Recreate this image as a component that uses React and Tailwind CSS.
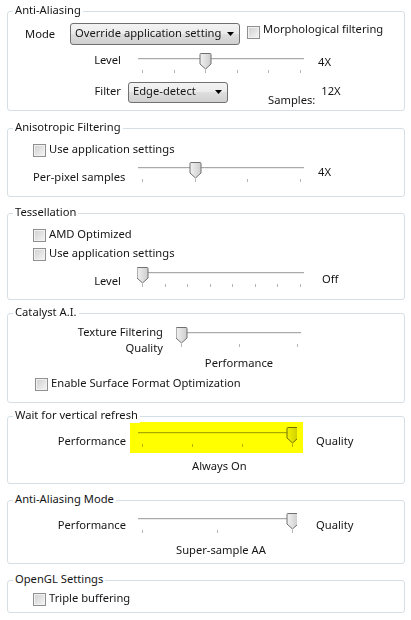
import React, { useId } from 'react';

// Win7-style trackbar: thin track, pointed thumb, ticks underneath
const Slider = ({ width, ticks, value, className = '' }) => {
    const id = useId();
    const inset = 5;
    const span = width - inset * 2;
    const xs = Array.from({ length: ticks }, (_, i) => Math.round(inset + (span * i) / (ticks - 1)));
    const t = xs[value] + 0.5;
    const thumb = `M${t - 4.5},0.5 H${t + 4.5} Q${t + 5.5},0.5 ${t + 5.5},1.5 V11 L${t},16 L${t - 5.5},11 V1.5 Q${t - 5.5},0.5 ${t - 4.5},0.5 Z`;
    return (
        <svg width={width} height={22} className={`block shrink-0 ${className}`}>
            <defs>
                <linearGradient id={id} x1="0" x2="1" y1="0" y2="0">
                    <stop offset="0" stopColor="#f2f2f2" />
                    <stop offset="1" stopColor="#cdcdcd" />
                </linearGradient>
            </defs>
            <line x1={1} x2={width - 1} y1={5.5} y2={5.5} stroke="#a9a9a9" />
            <line x1={1} x2={width - 1} y1={6.5} y2={6.5} stroke="#ececec" />
            {xs.map((x) => (
                <line key={x} x1={x + 0.5} x2={x + 0.5} y1={17} y2={20} stroke="#b5b5b5" />
            ))}
            <path d={thumb} fill={`url(#${id})`} stroke="#707070" />
        </svg>
    );
};

const Check = ({ className = '' }) => (
    <span className={`block h-[13px] w-[13px] shrink-0 border border-[#8e8f8f] bg-linear-to-br from-[#cfcfcf] to-[#f6f6f6] shadow-[inset_0_0_0_1px_#f2f2f2] ${className}`} />
);

const CheckRow = ({ label, className = '' }) => (
    <div className={`flex h-[13px] items-center ${className}`}>
        <Check />
        <span className="ml-[3px] -mt-[4px] leading-[16px] whitespace-nowrap">{label}</span>
    </div>
);

const Combo = ({ value, className = '' }) => (
    <div className={`flex shrink-0 items-center justify-between rounded-[3px] border border-[#707070] bg-[linear-gradient(#f3f3f3,#ebebeb_50%,#dedede_50%,#d0d0d0)] pl-[4px] pr-[5px] pb-[3px] ${className}`}>
        <span className="min-w-0 overflow-hidden leading-[16px] whitespace-nowrap">{value}</span>
        <svg width="7" height="4" className="mt-[2px] shrink-0">
            <path d="M0 0H7L3.5 4Z" fill="#000" />
        </svg>
    </div>
);

const Group = ({ title, className = '', children }) => (
    <div className={`relative box-border w-[398px] rounded-[3px] border border-[#d5dfe5] ${className}`}>
        <span className="absolute left-[5px] top-[-10px] bg-white px-[2px] leading-[16px] whitespace-nowrap">{title}</span>
        {children}
    </div>
);

const App = () => {
    return (
        <div className="h-[620px] w-[411px] overflow-hidden bg-white pl-[7px] pt-[11px] font-['Noto_Sans','Open_Sans',sans-serif] text-[11.2px] text-[#151515]">
            <Group title="Anti-Aliasing" className="h-[100px]">
                <div className="mt-[11px] flex h-[22px] items-start">
                    <span className="ml-[17px] mt-[3px] w-[45px] leading-[16px]">Mode</span>
                    <Combo value="Override application setting" className="h-[22px] w-[170px]" />
                    <Check className="ml-[7px] mt-[3px]" />
                    <span className="ml-[3px] -mt-[2px] leading-[16px] whitespace-nowrap">Morphological filtering</span>
                </div>
                <div className="mt-[8px] flex h-[22px] items-start">
                    <span className="-mt-[1px] w-[113px] text-right leading-[16px]">Level</span>
                    <Slider width={168} ticks={6} value={2} className="ml-[16px]" />
                    <span className="ml-[13px] mt-[1px] leading-[16px]">4X</span>
                </div>
                <div className="mt-[7px] flex h-[21px] items-start">
                    <span className="mt-[1px] w-[113px] text-right leading-[16px]">Filter</span>
                    <Combo value="Edge-detect" className="ml-[7px] h-[21px] w-[100px]" />
                    <span className="ml-[40px] mt-[10px] leading-[16px]">Samples:</span>
                    <span className="ml-[6px] mt-[1px] leading-[16px]">12X</span>
                </div>
            </Group>

            <Group title="Anisotropic Filtering" className="mt-[17px] h-[69px]">
                <CheckRow label="Use application settings" className="ml-[25px] mt-[15px]" />
                <div className="mt-[5px] flex items-start">
                    <span className="ml-[25px] mt-[7px] w-[104px] leading-[16px] whitespace-nowrap">Per-pixel samples</span>
                    <Slider width={168} ticks={4} value={1} />
                    <span className="ml-[13px] mt-[2px] leading-[16px]">4X</span>
                </div>
            </Group>

            <Group title="Tessellation" className="mt-[16px] h-[87px]">
                <CheckRow label="AMD Optimized" className="ml-[25px] mt-[15px]" />
                <CheckRow label="Use application settings" className="ml-[25px] mt-[6px]" />
                <div className="mt-[6px] flex items-start">
                    <span className="mt-[6px] w-[113px] text-right leading-[16px]">Level</span>
                    <Slider width={168} ticks={8} value={0} className="ml-[16px]" />
                    <span className="ml-[17px] mt-[4px] leading-[16px]">Off</span>
                </div>
            </Group>

            <Group title="Catalyst A.I." className="mt-[13px] h-[90px]">
                <div className="mt-[10px] flex items-start">
                    <div className="w-[155px] text-right leading-[16px]">
                        <div>Texture Filtering</div>
                        <div>Quality</div>
                    </div>
                    <div className="ml-[13px] mt-[3px] flex flex-col items-center">
                        <Slider width={126} ticks={3} value={0} />
                        <span className="mt-[6px] leading-[16px]">Performance</span>
                    </div>
                </div>
                <CheckRow label="Enable Surface Format Optimization" className="ml-[27px] mt-[7px]" />
            </Group>

            <Group title="Wait for vertical refresh" className="mt-[13px] h-[68px]">
                <div className="mt-[5px] flex items-start">
                    <span className="mt-[11px] w-[118px] text-right leading-[16px]">Performance</span>
                    <div className="ml-[4px] h-[31px] w-[173px] bg-[#ffff00] pl-[7px] pt-[5px]">
                        <Slider width={160} ticks={4} value={3} className="mix-blend-multiply" />
                    </div>
                    <span className="ml-[13px] mt-[11px] leading-[16px]">Quality</span>
                </div>
                <div className="ml-[184px] mt-[5px] leading-[16px]">Always On</div>
            </Group>

            <Group title="Anti-Aliasing Mode" className="mt-[16px] h-[64px]">
                <div className="mt-[11px] flex items-start">
                    <span className="mt-[5px] w-[118px] text-right leading-[16px]">Performance</span>
                    <Slider width={160} ticks={3} value={2} className="ml-[11px] mt-[1px]" />
                    <span className="ml-[19px] mt-[5px] leading-[16px]">Quality</span>
                </div>
                <div className="ml-[168px] mt-[7px] leading-[16px]">Super-sample AA</div>
            </Group>

            <Group title="OpenGL Settings" className="mt-[16px] h-[33px]">
                <CheckRow label="Triple buffering" className="ml-[25px] mt-[12px]" />
            </Group>
        </div>
    );
};

export default App;
